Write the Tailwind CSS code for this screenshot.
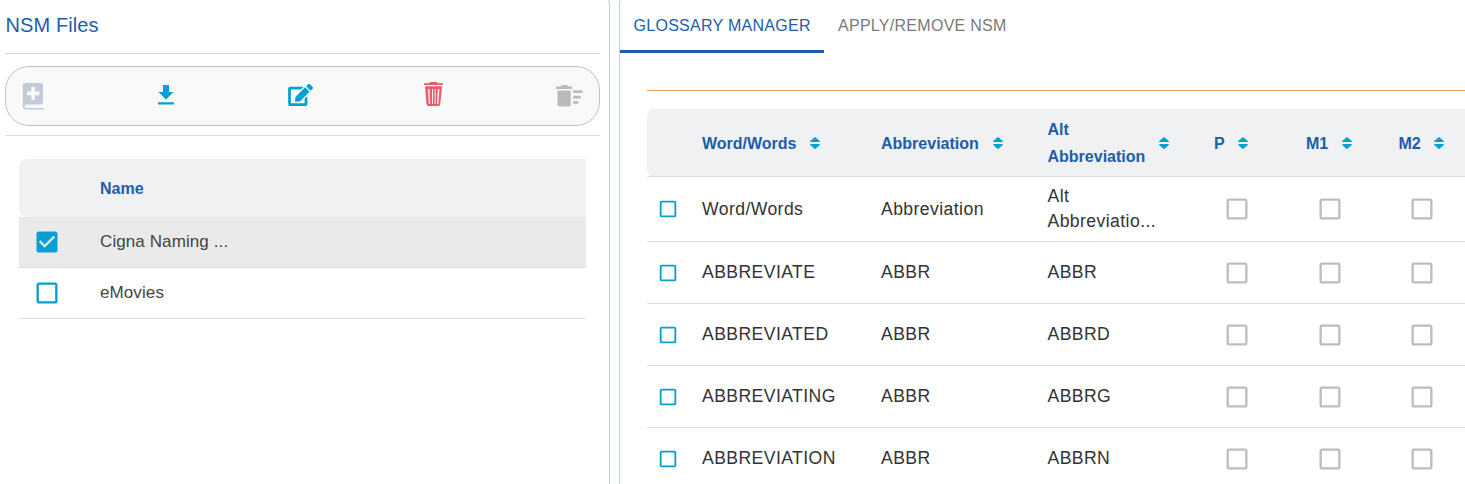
<!DOCTYPE html>
<html lang="en">
<head>
<meta charset="utf-8">
<title>NSM Files</title>
<script src="https://cdn.jsdelivr.net/npm/@tailwindcss/browser@4"></script>
</head>
<body class="h-[484px] overflow-hidden bg-white font-['Liberation_Sans',Arial,sans-serif]">
<svg class="hidden">
  <symbol id="box" viewBox="0 0 24 24"><path fill="currentColor" d="M19 5v14H5V5h14m0-2H5c-1.1 0-2 .9-2 2v14c0 1.1.9 2 2 2h14c1.1 0 2-.9 2-2V5c0-1.1-.9-2-2-2z"/></symbol>
  <symbol id="checked" viewBox="0 0 24 24"><path fill="currentColor" d="M19 3H5c-1.11 0-2 .9-2 2v14c0 1.1.89 2 2 2h14c1.11 0 2-.9 2-2V5c0-1.1-.89-2-2-2zm-9 14l-5-5 1.41-1.41L10 14.17l7.59-7.59L19 8l-9 9z"/></symbol>
  <symbol id="sort" viewBox="0 0 10 12"><path fill="currentColor" d="M5 0l4.800 4.100q.5 1-.6 1H.8q-1.100 0-.6-1zM5 12.200L.2 8q-.5-1 .6-1h8.400q1.100 0 .6 1z"/></symbol>
</svg>
<div class="flex h-[484px] gap-[9px] overflow-hidden">
  <section class="-mt-1 h-[500px] w-[610px] shrink-0 rounded-tr-lg border-t border-r border-[#c3cbd9] pl-[5px] pr-[9px]">
    <h1 class="flex h-[57px] items-center border-b border-[#cdd3e0] pl-[0.5px] text-[20px] tracking-[0.1px] text-[#1c5dab]">NSM Files</h1>
    <div class="mt-3 flex h-[60px] items-center justify-between rounded-[24px] border border-[#c0c0c0] bg-[#f9f9f9] px-4">
      <svg class="mb-px h-[28px] w-[22px] text-[#c3cbd9]" viewBox="0 0 22 28"><path fill="currentColor" fill-rule="evenodd" d="M3.500 1H19a2 2 0 0 1 2 2V20.500a2 2 0 0 1-2 2H4.500q-2 0-2 1.800t2 1.800H22V27.500H3.500A2.800 2.800 0 0 1 .8 24.700V3.700A2.700 2.700 0 0 1 3.500 1zM9.400 5V9.600H5v3.600h4.400V18h3.500v-4.800h4.600V9.600h-4.600V5z"/></svg>
      <svg class="mb-[2px] ml-[3px] h-[20px] w-[16px] text-[#05a0d1]" viewBox="0 0 16 20"><path fill="currentColor" d="M5 0h6v7h4.500L8 14.500.5 7H5zM0 17.200h16v2.400H0z"/></svg>
      <svg class="mb-[2px] ml-[2px] h-[22px] w-[25px] text-[#05a0d1]" viewBox="0 0 576 512"><path fill="currentColor" d="M402.600 83.200l90.200 90.200c3.800 3.800 3.800 10 0 13.800L274.400 405.600l-92.800 10.300c-12.400 1.400-22.900-9.100-21.500-21.500l10.300-92.800L388.800 83.200c3.800-3.800 10-3.800 13.800 0zm162-22.900l-48.800-48.800c-15.200-15.200-39.900-15.200-55.200 0l-35.400 35.400c-3.800 3.800-3.800 10 0 13.800l90.200 90.200c3.800 3.800 10 3.800 13.800 0l35.400-35.400c15.200-15.300 15.200-40 0-55.200zM384 346.200V448H64V128h229.800c3.200 0 6.200-1.300 8.500-3.500l40-40c7.600-7.600 2.200-20.500-8.500-20.500H48C21.500 64 0 85.500 0 112v352c0 26.500 21.500 48 48 48h352c26.500 0 48-21.500 48-48V306.200c0-10.700-12.900-16-20.500-8.500l-40 40c-2.200 2.300-3.500 5.300-3.500 8.500z"/></svg>
      <svg class="mr-[2px] mb-1 h-[24px] w-[19px] text-[#ea5b68]" viewBox="0 0 19 24"><path fill="currentColor" fill-rule="evenodd" d="M0 1.300h5Q5.500 0 7 0h5q1.500 0 2 1.300h5V3H0zM1 4.200h17L16.300 22q-.2 2-2 2H4.700q-2 0-2.200-2zM3.900 7l1 15h1.300l-.8-15zm4.100 0v15h1V7zm2.600 0v15h1V7zm3.300 0l-.8 15h1.300l1-15z"/></svg>
      <svg class="h-[22px] w-[27px] text-[#bababa]" viewBox="0 0 27 22"><g fill="currentColor"><path d="M0 1.500h4.500Q5.300 0 6.500 0h4q1.200 0 2 1.500H16V4H0zM1.500 5.500h13.200V19.500a2 2 0 0 1-2 2H3.500a2 2 0 0 1-2-2z"/><rect x="17" y="5.300" width="9.700" height="2.700" rx="1"/><rect x="17" y="10.700" width="8" height="2.700" rx="1"/><rect x="17" y="16" width="5.500" height="2.700" rx="1"/></g></svg>
    </div>
    <div class="mt-[9px] border-t border-[#dcdcdc] pt-[23px] pl-[14px] pr-[14px]">
      <div class="flex h-[58px] items-center rounded-lg rounded-r-none bg-[#f0f1f3] pt-[2px] pl-[81px] text-[16px] font-bold text-[#1c5dab]">Name</div>
      <div class="flex h-[51px] items-center border-b border-[#dedede] bg-[#eaeaea] pl-[13.5px] text-[17px] tracking-[0.1px] text-[#444]"><svg class="mr-[39.5px] h-[28px] w-[28px] text-[#05a0d1]"><use href="#checked"/></svg><span class="-mt-px">Cigna Naming ...</span></div>
      <div class="flex h-[51px] items-center border-b border-[#dedede] pl-[13.5px] text-[17px] tracking-[0.1px] text-[#444]"><svg class="mr-[39.5px] h-[28px] w-[28px] text-[#05a0d1]"><use href="#box"/></svg><span class="-mt-px">eMovies</span></div>
    </div>
  </section>
  <section class="-mt-1 h-[500px] w-[900px] shrink-0 rounded-tl-lg border-t border-l border-[#c3cbd9]">
    <nav class="flex h-[56px] text-[16px] tracking-[0.28px]">
      <div class="flex w-[204px] items-center border-b-[3px] border-[#1c5dab] pt-1 pl-[13.5px] text-[#1c5dab]">GLOSSARY MANAGER</div>
      <div class="flex items-center border-b-[3px] border-transparent pt-1 pl-[14px] text-[#7a7a7a]">APPLY/REMOVE NSM</div>
    </nav>
    <div class="ml-[27px] mt-[37px] border-t border-[#f7994a] pt-[18px]">
      <div class="h-[68px] rounded-lg bg-[#f0f1f3]">
      <div class="grid h-[68px] grid-cols-[55px_179px_166.5px_166.5px_92px_92.5px_92px] items-center border-b border-[#dedede] text-[16px] leading-[27px] font-bold text-[#1c5dab]">
        <span></span>
        <div class="flex items-center gap-[13.5px]"><span class="pt-px">Word/Words</span><svg class="h-3 w-[10px] text-[#05a0d1]"><use href="#sort"/></svg></div>
        <div class="flex items-center gap-[14px]"><span class="pt-px">Abbreviation</span><svg class="h-3 w-[10px] text-[#05a0d1]"><use href="#sort"/></svg></div>
        <div class="flex items-center gap-[14px]"><span>Alt<br>Abbreviation</span><svg class="h-3 w-[10px] text-[#05a0d1]"><use href="#sort"/></svg></div>
        <div class="flex items-center gap-[13.5px]"><span class="pt-px">P</span><svg class="h-3 w-[10px] text-[#05a0d1]"><use href="#sort"/></svg></div>
        <div class="flex items-center gap-[14px]"><span class="pt-px">M1</span><svg class="h-3 w-[10px] text-[#05a0d1]"><use href="#sort"/></svg></div>
        <div class="flex items-center gap-[13px]"><span class="pt-px">M2</span><svg class="h-3 w-[10px] text-[#05a0d1]"><use href="#sort"/></svg></div>
      </div>
      </div>
      <div id="rows"></div>
    </div>
  </section>
</div>
<script>
const rows = [
  ['Word/Words', 'Abbreviation', 'Alt<br>Abbreviatio...'],
  ['ABBREVIATE', 'ABBR', 'ABBR'],
  ['ABBREVIATED', 'ABBR', 'ABBRD'],
  ['ABBREVIATING', 'ABBR', 'ABBRG'],
  ['ABBREVIATION', 'ABBR', 'ABBRN'],
];
const flag = '<svg class="ml-[9px] h-[28px] w-[28px] text-[#bdbdbd]"><use href="#box"/></svg>';
document.getElementById('rows').innerHTML = rows.map((r, i) => `
<div class="${i ? 'h-[62px]' : 'h-[65px]'} grid grid-cols-[55px_179px_166.5px_166.5px_93px_92px_92px] items-center border-b border-[#dedede] text-[17.6px] leading-[25px] tracking-[0.42px] text-[#333]">
  <svg class="ml-[10px] h-[22px] w-[22px] text-[#05a0d1]"><use href="#box"/></svg>
  <span>${r[0]}</span><span>${r[1]}</span><span>${r[2]}</span>${flag}${flag}${flag}
</div>`).join('');
</script>
</body>
</html>
